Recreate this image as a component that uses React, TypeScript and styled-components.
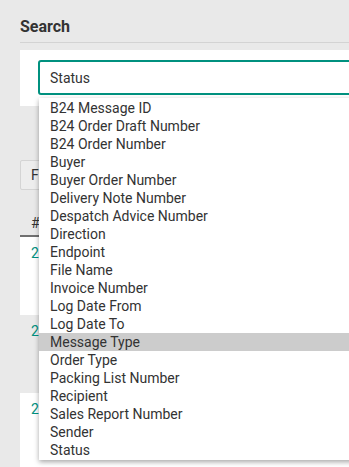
import React from "react";
import styled, { createGlobalStyle } from "styled-components";

const teal = "#00917f";

const GlobalStyle = createGlobalStyle`
  html, body {
    margin: 0;
    padding: 0;
    background: #e9e9e9;
    overflow: hidden;
  }
  body {
    font-family: Roboto, "Liberation Sans", sans-serif;
    color: #333;
  }
`;

// wider than the window: the select and the list run off the right edge
const Page = styled.div`
  width: 680px;
  padding: 17px 20px 0;
`;

const Title = styled.h2`
  margin: 0;
  padding-bottom: 5px;
  font-size: 16px;
  font-weight: 700;
  line-height: 20px;
  color: #333;
  border-bottom: 1px solid #d3d3d3;
`;

const Card = styled.div`
  margin-top: 7px;
  padding: 10px 18px 11px;
  background: #fff;
`;

const Field = styled.div`
  position: relative;
`;

const SelectBox = styled.div`
  display: flex;
  align-items: center;
  height: 35px;
  box-sizing: border-box;
  padding: 0 10px;
  border: 2px solid ${teal};
  border-radius: 3px;
  font-size: 14px;
  color: #333;
`;

const Options = styled.ul`
  position: absolute;
  top: calc(100% + 3px);
  left: 1px;
  z-index: 10;
  width: 440px;
  margin: 0;
  padding: 1px 0;
  list-style: none;
  background: #fff;
  box-shadow: 0 2px 5px rgba(0, 0, 0, 0.35);
`;

const Option = styled.li<{ $active?: boolean }>`
  padding: 0 11px;
  font-size: 14px;
  line-height: 18px;
  white-space: nowrap;
  color: #333;
  background: ${(p) => (p.$active ? "#cccccc" : "transparent")};
`;

const FilterButton = styled.button`
  margin-top: 54px;
  height: 30px;
  padding: 0 10px;
  border: 1px solid #d4d4d4;
  border-radius: 2px;
  background: #ededed;
  font-family: inherit;
  font-size: 14px;
  color: #333;
`;

const Table = styled.div`
  margin-top: 20px;
`;

const HeadRow = styled.div`
  display: flex;
  height: 27px;
  box-sizing: border-box;
  padding: 0 11px;
  align-items: center;
  border-bottom: 2px solid #707070;
  font-size: 14px;
  color: #333;
`;

const Row = styled.div<{ $odd?: boolean }>`
  height: 78px;
  box-sizing: border-box;
  padding: 6px 11px;
  background: ${(p) => (p.$odd ? "#eaeaea" : "#fff")};
  font-size: 14px;
  line-height: 20px;
  color: ${teal};
`;

const fields = [
  "B24 Message ID",
  "B24 Order Draft Number",
  "B24 Order Number",
  "Buyer",
  "Buyer Order Number",
  "Delivery Note Number",
  "Despatch Advice Number",
  "Direction",
  "Endpoint",
  "File Name",
  "Invoice Number",
  "Log Date From",
  "Log Date To",
  "Message Type",
  "Order Type",
  "Packing List Number",
  "Recipient",
  "Sales Report Number",
  "Sender",
  "Status",
];

const rows = ["2024051400231", "2024051400230", "2024051400229"];

export default function App() {
  return (
    <>
      <GlobalStyle />
      <Page>
        <Title>Search</Title>
        <Card>
          <Field>
            <SelectBox>Status</SelectBox>
            <Options>
              {fields.map((f) => (
                <Option key={f} $active={f === "Message Type"}>
                  {f}
                </Option>
              ))}
            </Options>
          </Field>
        </Card>
        <FilterButton>Filter</FilterButton>
        <Table>
          <HeadRow>#</HeadRow>
          {rows.map((r, i) => (
            <Row key={r} $odd={i % 2 === 1}>
              {r}
            </Row>
          ))}
        </Table>
      </Page>
    </>
  );
}
